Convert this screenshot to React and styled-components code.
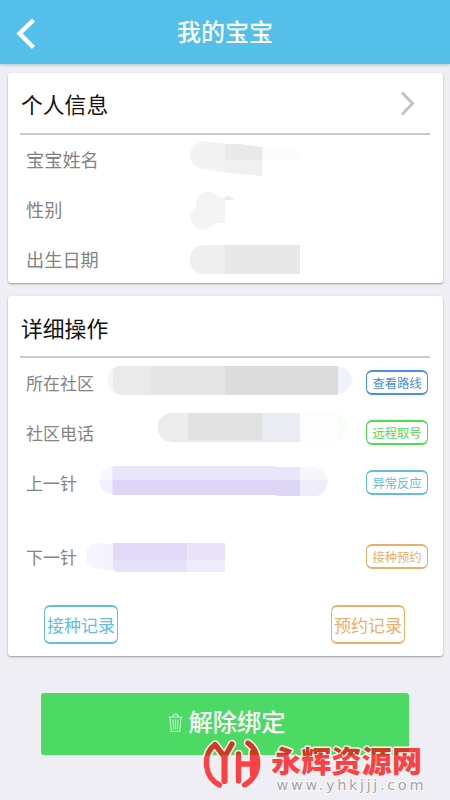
import React from "react";
import styled, { createGlobalStyle } from "styled-components";

const GlobalStyle = createGlobalStyle`
  * { box-sizing: border-box; }
  body {
    margin: 0;
    background: #efeef4;
    font-family: "Noto Sans CJK SC", "Noto Sans", sans-serif;
  }
`;

const Page = styled.main`
  position: relative;
  width: 450px;
  height: 800px;
  overflow: hidden;
  background: #efeef4;
`;

const Header = styled.header`
  display: grid;
  grid-template-columns: 60px 1fr 60px;
  align-items: center;
  height: 64px;
  background: #54bfe9;
  box-shadow: 0 1px 3px rgba(60, 80, 100, 0.3);
`;

const Title = styled.h1`
  margin: 0;
  text-align: center;
  font-size: 24px;
  line-height: 62px;
  height: 64px;
  font-weight: 500;
  color: #fff;
`;

const BackIcon = styled.svg`
  width: 24px;
  height: 36px;
  margin: 4px 0 0 14px;
`;

const Card = styled.section`
  height: ${(p) => p.$height}px;
  margin: ${(p) => p.$top}px 7px 0 8px;
  padding: 0 13px 0 12px;
  background: #fff;
  border-radius: 3px;
  box-shadow: 0 1px 2px rgba(0, 0, 0, 0.36);
`;

const CardHeader = styled.div`
  display: flex;
  align-items: center;
  justify-content: space-between;
  height: 62px;
  padding: 0 15px 0 1px;
  border-bottom: 2px solid #cbcbcd;
`;

const CardTitle = styled.h2`
  margin: ${(p) => (p.$low ? 4 : 2)}px 0 0;
  font-size: 21.8px;
  line-height: 30px;
  font-weight: 400;
  color: #111;
`;

const Chevron = styled.svg`
  width: 16px;
  height: 26px;
  margin-top: 1px;
`;

const Row = styled.div`
  display: flex;
  align-items: center;
  height: ${(p) => p.$height || 50}px;
  padding-left: 6px;
`;

const Label = styled.span`
  flex: 0 0 60px;
  width: 60px;
  min-width: 0;
  margin-top: ${(p) => (p.$size > 18 ? -2 : 0)}px;
  white-space: nowrap;
  font-size: ${(p) => p.$size}px;
  line-height: 26px;
  color: #848484;
`;

const Smudge = styled.svg`
  flex: 0 0 270px;
  width: 270px;
  height: 50px;
`;

const TONES = { blue: "#4a8fe2", green: "#4be04e", sky: "#62bddf", orange: "#eab067" };

const Tag = styled.button`
  flex: none;
  width: 62px;
  height: 25px;
  margin: -1px 0 0 10px;
  padding: 0;
  border: 1px solid ${(p) => TONES[p.$tone]};
  border-width: 2px 1px;
  border-radius: 6px;
  background: #fff;
  color: ${(p) => TONES[p.$tone]};
  font-family: inherit;
  font-size: 12.3px;
  line-height: 20px;
  white-space: nowrap;
`;

const RecordBar = styled.div`
  display: flex;
  justify-content: space-between;
  padding: 0 25px 0 24px;
  margin-top: -1px;
`;

const RecordButton = styled.button`
  width: 74px;
  height: 39px;
  padding: 0;
  border: 1px solid ${(p) => TONES[p.$tone]};
  border-width: 2px 1px;
  border-radius: 6px;
  background: #fff;
  color: ${(p) => TONES[p.$tone]};
  font-family: inherit;
  font-size: 17px;
  line-height: 34px;
  white-space: nowrap;
`;

const UnbindButton = styled.button`
  display: flex;
  align-items: center;
  justify-content: center;
  gap: 5px;
  width: 368px;
  height: 62px;
  margin: 37px 0 0 41px;
  padding: 0 0 7px 4px;
  border: 0;
  border-radius: 3px;
  background: #4cd964;
  color: #fff;
  font-family: inherit;
  font-size: 24.3px;
  font-weight: 500;
`;

const TrashIcon = styled.svg`
  width: 15px;
  height: 20px;
  margin-top: 5px;
`;

const Watermark = styled.svg`
  position: absolute;
  left: 200px;
  top: 735px;
  width: 250px;
  height: 65px;
`;

const LogoStrokes = ({ stroke, width }) => (
  <g fill="none" stroke={stroke} strokeWidth={width} strokeLinejoin="round" strokeLinecap="round">
    <path d="M219.500 785C204 777 202 755 215 744.500L224.500 757L232 744" />
    <path d="M224.500 757V781" strokeWidth={width + 0.8} />
    <path d="M238.500 754V781" />
    <path d="M239 764H252" />
    <path d="M248 743C261 752 262 775 244.500 785" />
    <path d="M252.500 752V774" />
  </g>
);

export default function App() {
  return (
    <>
      <GlobalStyle />
      <Page>
        <Header>
          <BackIcon viewBox="14 16 24 36" fill="none" stroke="#fff" strokeWidth="4.500">
            <path d="M33.500 20L19.500 33.500L33.500 47.500" />
          </BackIcon>
          <Title>我的宝宝</Title>
        </Header>

        <Card $top={9} $height={210}>
          <CardHeader>
            <CardTitle>个人信息</CardTitle>
            <Chevron viewBox="398 91 16 26" fill="none" stroke="#c2c2c8" strokeWidth="3">
              <path d="M401 92.500L411.500 103.500L401 114.500" />
            </Chevron>
          </CardHeader>
          <Row>
            <Label $size={18.2}>宝宝姓名</Label>
            <Smudge viewBox="86 135 270 50">
              <path d="M225 143.500L205 141C186 143 185 166 202 169L225 172.500Z" fill="#f3f3f3" />
              <path d="M225 144H240L262.500 147V160H225Z" fill="#e9e9e9" />
              <path d="M225 160H262.500V176L225 172.500Z" fill="#f0f0f0" />
              <path d="M262.500 147H292Q299 150 300 160H262.500Z" fill="#fcfcfc" />
            </Smudge>
          </Row>
          <Row>
            <Label $size={18.2}>性别</Label>
            <Smudge viewBox="86 185 270 50" fill="#f4f4f4">
              <circle cx="208" cy="203.500" r="12" />
              <circle cx="203" cy="217" r="12.500" />
              <path d="M205 197H225V223H205Z" />
              <path d="M225 196H230L234 200H225Z" fill="#ededed" />
            </Smudge>
          </Row>
          <Row>
            <Label $size={18.2}>出生日期</Label>
            <Smudge viewBox="86 235 270 50">
              <path d="M225 245H204A14.500 14.500 0 0 0 204 274H225Z" fill="#efefef" />
              <path d="M225 245H300V274H225Z" fill="#e8e8e8" />
            </Smudge>
          </Row>
        </Card>

        <Card $top={13} $height={360}>
          <CardHeader>
            <CardTitle $low>详细操作</CardTitle>
          </CardHeader>
          <Row>
            <Label $size={17}>所在社区</Label>
            <Smudge viewBox="86 358 270 50">
              <path d="M113 368C106 373 106 388 113 392Z" fill="#f6f6f6" />
              <path d="M150 366H121Q116 366 113 369V390Q116 395 121 395H150Z" fill="#eaeaea" />
              <path d="M150 366H225V395H150Z" fill="#e6e6e6" />
              <path d="M225 366H338V395H225Z" fill="#dcdcdc" />
              <path d="M338 366C356 369 357 390 338 394Z" fill="#eff2fa" />
            </Smudge>
            <Tag $tone="blue">查看路线</Tag>
          </Row>
          <Row>
            <Label $size={17}>社区电话</Label>
            <Smudge viewBox="86 408 270 50">
              <path d="M188 413H172A14.500 14.500 0 0 0 172 442H188Z" fill="#ececec" />
              <path d="M188 413H262.500V442H188Z" fill="#e1e1e1" />
              <path d="M262.500 413H300V442H262.500Z" fill="#e9edf3" />
              <path d="M300 413H338V442H300Z" fill="#fdfdff" />
              <path d="M338 414Q348 418 348 427T338 440Z" fill="#f5fff6" />
              <path d="M172 440H300V442H172Z" fill="#e9e7f7" />
            </Smudge>
            <Tag $tone="green">远程取号</Tag>
          </Row>
          <Row>
            <Label $size={17}>上一针</Label>
            <Smudge viewBox="86 458 270 50">
              <path d="M113 466Q99 468 99 480H113Z" fill="#f8f7fe" />
              <path d="M99 480Q101 494 113 494V480Z" fill="#f3f0fd" />
              <path d="M112.500 466H275V467H300V480H112.500Z" fill="#eae6fa" />
              <path d="M112.500 480H300V496H279L275 495H112.500Z" fill="#ddd5f6" />
              <path d="M300 467H315Q326 470 328 480H300Z" fill="#f7f6fd" />
              <path d="M300 480H328Q326 496 315 496H300Z" fill="#efedfa" />
            </Smudge>
            <Tag $tone="sky">异常反应</Tag>
          </Row>
          <Row $height={98}>
            <Label $size={17}>下一针</Label>
            <Smudge viewBox="86 532 270 50">
              <circle cx="99" cy="556" r="13.500" fill="#f6f4fe" />
              <path d="M105 544H113V570H105Z" fill="#f4f1fd" />
              <path d="M113 543H187.500V560H113Z" fill="#e0d9f7" />
              <path d="M113 560H187.500V572H116L113 569Z" fill="#e6e0f9" />
              <path d="M187.500 543H225V560H187.500Z" fill="#e8e3f9" />
              <path d="M187.500 560H225V572H187.500Z" fill="#f0ecfb" />
            </Smudge>
            <Tag $tone="orange">接种预约</Tag>
          </Row>
          <RecordBar>
            <RecordButton $tone="sky">接种记录</RecordButton>
            <RecordButton $tone="orange">预约记录</RecordButton>
          </RecordBar>
        </Card>

        <UnbindButton>
          <TrashIcon viewBox="0 0 15 20" fill="none" stroke="#c9f6cf" strokeWidth="1.100">
            <path d="M0.500 4H14.500M5 3.500Q5 1 7.500 1T10 3.500M2 4.500L3.300 18.500H11.700L13 4.500M5 6.500L5.700 16.500M7.500 6.500V16.500M10 6.500L9.300 16.500" />
          </TrashIcon>
          解除绑定
        </UnbindButton>

        <Watermark viewBox="200 735 250 65">
          <defs>
            <pattern id="ink" patternUnits="userSpaceOnUse" x="200" y="735" width="250" height="65">
              <rect width="250" height="65" fill="#fb4145" />
              <rect width="209" height="20" fill="#c93d22" />
            </pattern>
          </defs>
          <LogoStrokes stroke="#f8f4ef" width={8.5} />
          <LogoStrokes stroke="url(#ink)" width={5.4} />
          <text
            x="271"
            y="771.500"
            textLength="151"
            fontFamily="Noto Sans CJK SC, sans-serif"
            fontWeight="900"
            fontSize="30"
            fill="url(#ink)"
            stroke="#f8f4ef"
            strokeWidth="3"
            strokeLinejoin="round"
            paintOrder="stroke"
          >
            永辉资源网
          </text>
          <text
            x="276.500"
            y="789.500"
            textLength="147"
            fontFamily="DejaVu Sans, sans-serif"
            fontSize="14.500"
            fill="#a5a5a8"
            stroke="#fafafa"
            strokeWidth="2"
            paintOrder="stroke"
          >
            www.yhkjjj.com
          </text>
        </Watermark>
      </Page>
    </>
  );
}
